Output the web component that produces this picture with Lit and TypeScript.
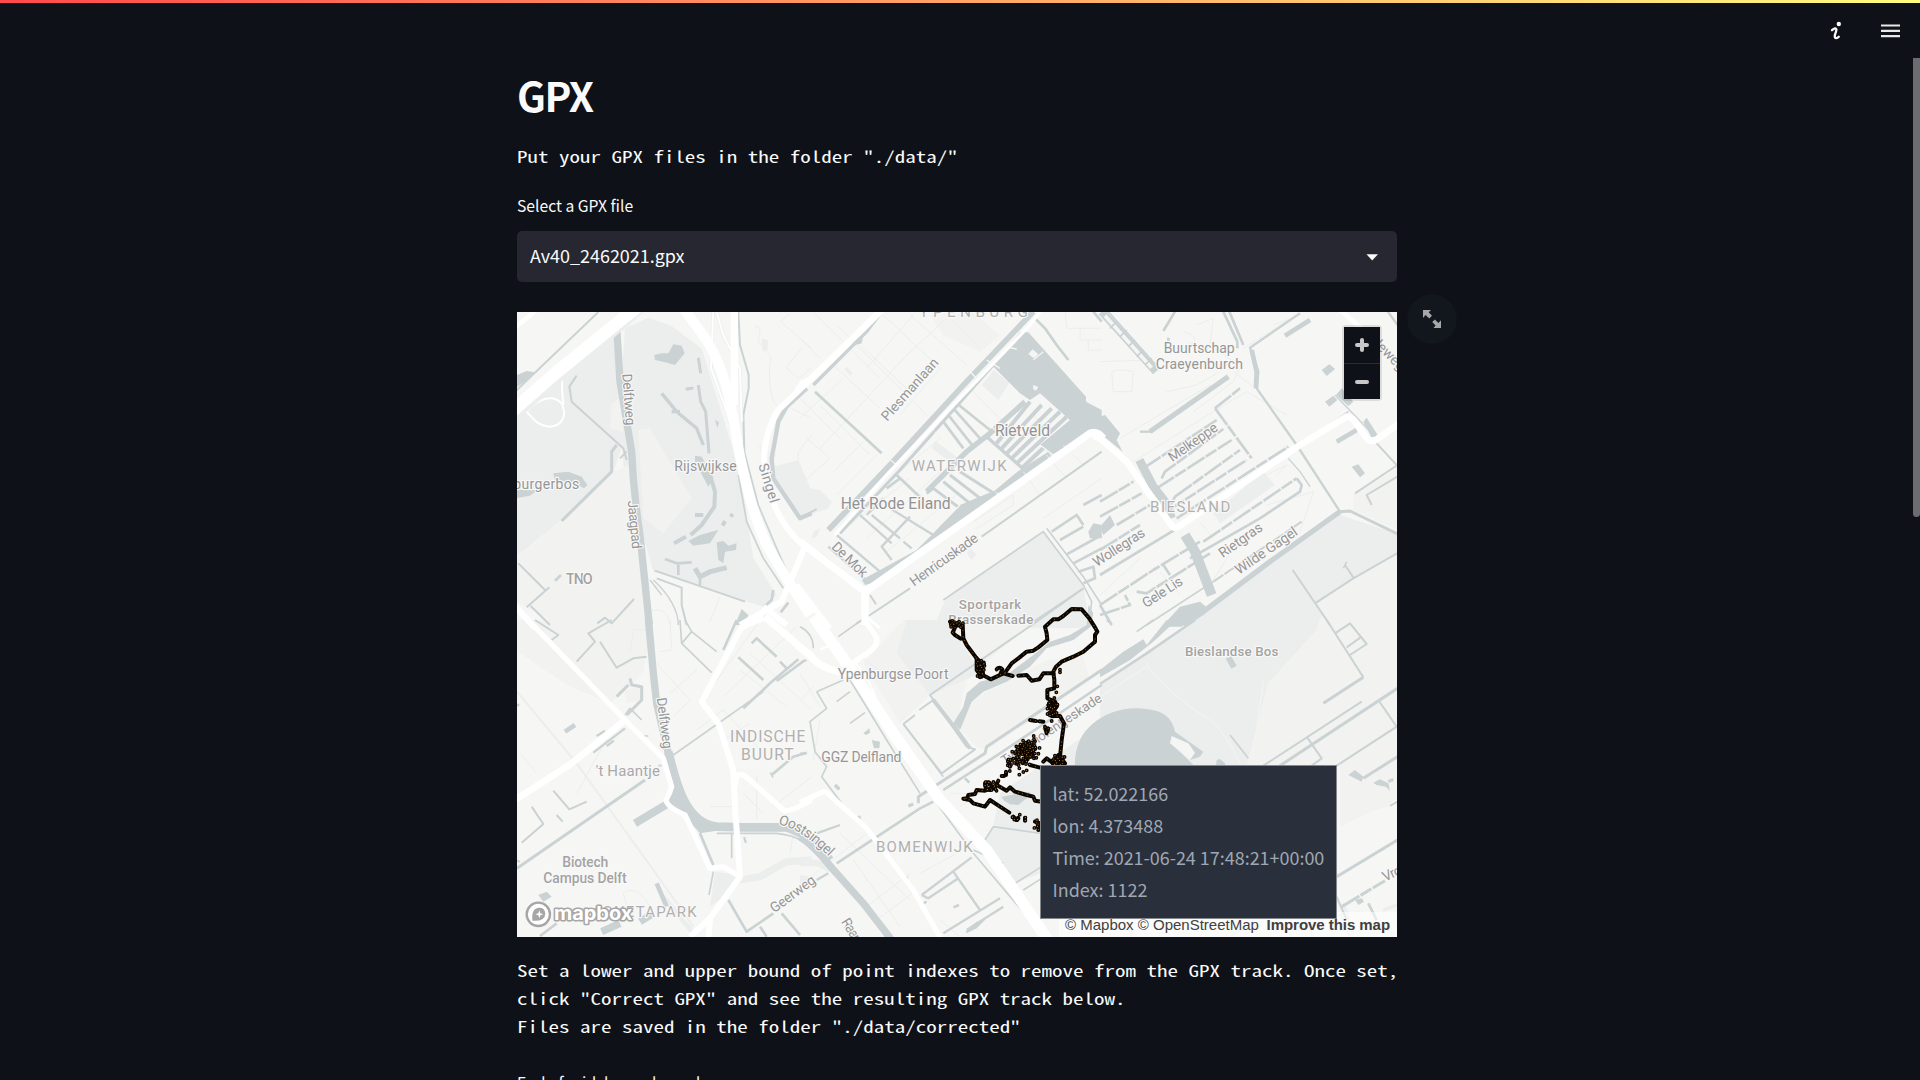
import { LitElement, html, svg, css } from "lit";
import { customElement } from "lit/decorators.js";

type Shape = [string, number, string];
type Label = [number, number, string, number, number, number, string?];

interface Tile {
  x: number;
  y: number;
  areas: [string, string][];
  lines: Shape[];
}

/* Each tile is drawn at three units per pixel, from its own origin. */
const TILES: Record<string, Tile> = {
  A: {
    x: 510, y: 305,
    areas: [
      ["park", "M345 70L415 38L480 60L575 130L690 500L730 760L800 870L760 905L430 800L340 480L330 300Z"],
      ["soft", "M385 375L420 370L545 580L460 685L400 640Z"],
      ["park", "M0 330L310 75L330 300L345 400L310 500L155 645L0 770Z"],
      ["soft", "M0 775L155 645L310 500L355 480L405 780L415 960L390 1000L150 960L0 880Z"],
      ["soft", "M305 295L330 280L340 380L300 370Z"],
      ["water", "M433 150L455 145L475 145L490 118L515 122L524 145L495 180L465 172L435 165Z"],
      ["water", "M535 708L570 690L625 675L600 715L550 722Z"],
      ["water", "M620 712L640 708L655 722L680 715L678 735L645 740L640 775L625 765Z"],
      ["water", "M21 210L50 198L75 202L60 220L15 250Z"],
      ["water", "M130 505L175 500L215 515L232 540L222 550L180 528L135 528Z"],
      ["water", "M15 555L80 555L110 520L90 550L60 572L15 580Z"],
      ["water", "M695 912L715 930L705 960L675 960Z"],
      ["water", "M555 452L575 455L610 520L595 545L555 470Z"],
      ["water", "M615 345L627 352L622 368Z"],
      ["park", "M755 100L775 105L772 135L758 140Z"],
      ["park", "M790 485L865 465L905 560L905 620L870 640L790 530Z"],
      ["soft", "M745 420L800 450L770 500Z"],
    ],
    lines: [
      ["faint", 3, "M735 65Q750 60 750 80L745 110L783 155Q770 220 790 290L800 300M840 25L812 50L905 130M905 190L865 220L828 188L875 130M905 390L865 440L865 465M905 340L845 310M600 950L630 875M420 920Q470 900 480 960"],
      ["water", 6, "M10 265L265 21"],
      ["water", 22, "M320 65L330 230L365 440Q370 560 390 690L418 960"],
      ["water", 6, "M200 212L178 245L185 290L340 430L350 465M350 440L330 460"],
      ["water", 9, "M320 420L305 440L305 500L155 648"],
      ["water", 9, "M565 158L572 205M527 253L550 249M565 240L572 290L587 320L597 445"],
      ["water", 10, "M455 265L500 320L560 370L580 420M485 320H510"],
      ["water", 12, "M600 510L615 560L613 605L575 660L542 690M555 630H580M492 715L528 695M668 627L662 635M645 648L638 662"],
      ["water", 8, "M465 762L500 775L545 772M505 780V810M570 815V840"],
      ["water", 15, "M555 790L570 815L600 800L650 788"],
      ["water", 6, "M435 797L705 890M440 820L515 848L515 900L530 960"],
      ["water", 4, "M420 825L455 870M430 825C480 870 505 920 505 960"],
      ["water", 8, "M790 855L785 885L762 905M835 893L812 922M800 930L820 955"],
      ["water", 6, "M25 775L105 855M50 907L118 847M62 903L120 960M262 955L285 938L305 955L372 882"],
      ["water", 8, "M135 827L153 810"],
      ["water", 6, "M685 20L690 120L716 210L716 250L700 330L703 440"],
      ["water", 5, "M685 510L710 650L760 760L820 850M703 440L745 600L800 730L840 820"],
      ["water", 13, "M890 250L830 305L805 350L785 460L790 520L870 640L905 625"],
      ["case", 10, "M610 10L603 190L640 290L675 400M617 10L640 90L690 190L695 350M50 320C90 275 130 270 155 295C175 340 150 365 115 365C80 360 70 340 45 315M160 300C150 200 155 200 200 165"],
      ["road", 6, "M610 10L603 190L640 290L675 400M617 10L640 90L690 190L695 350M50 320C90 275 130 270 155 295C175 340 150 365 115 365C80 360 70 340 45 315M160 300C150 200 155 200 200 165"],
      ["road", 14, "M0 80L85 10"],
      ["case", 46, "M0 335L130 220L345 40L390 0"],
      ["road", 38, "M0 325L130 210L345 35L390 0"],
      ["road", 30, "M520 10L590 105C640 190 660 270 680 400C700 520 725 620 770 720L830 820L900 930"],
      ["road", 22, "M673 10L673 300"],
      ["road", 18, "M910 215L800 320C760 400 755 460 770 540C800 630 830 680 885 725"],
      ["road", 18, "M885 725L815 890L690 960M760 905L830 960M0 885L75 970"],
    ],
  },
  B: {
    x: 800, y: 305,
    areas: [
      ["park", "M0 545L60 555L95 590L85 610L0 640Z"],
      ["soft", "M390 30L520 25L600 90L540 140L430 90Z"],
      ["park", "M440 875L730 675L850 840L870 970L400 970Z"],
      ["water", "M575 180L660 82L685 82L858 275L858 290L905 315L905 378L870 385L755 450L720 420L810 345L720 265L690 285L660 265L600 205Z"],
      ["land", "M698 133L715 148L702 160L685 147Z"],
      ["land", "M700 240L715 246L708 257L699 252Z"],
      ["park", "M582 195L628 235L595 285L545 240Z"],
      ["park", "M405 408L470 455L455 475L395 430Z"],
      ["park", "M140 185L158 205L150 212L133 193Z"],
      ["park", "M510 730L530 748L515 765L500 745Z"],
      ["park", "M40 680L62 670L50 695L35 700Z"],
      ["water", "M195 840L185 825L350 735L400 685L480 600L575 560L590 572L405 700L215 835Z"],
      ["water", "M655 498L745 440L755 455L600 565L580 560Z"],
      ["water", "M150 108L190 90L185 115L160 122Z"],
      ["water", "M865 680L880 655L905 660L905 700L870 700Z"],
    ],
    lines: [
      ["faint", 3, "M0 100L60 160M40 20L240 220M110 60L380 330M0 340L130 220M60 430L330 140M20 400L90 460L0 540M100 500L190 410M110 570L230 450M180 120L330 260M250 30L420 190L300 330M330 30L500 180M60 300L210 450M0 280L120 400M340 30L200 190M450 30L300 170M100 180L240 310M460 50L540 130M600 150L520 230M670 500L720 570M740 450L800 520M790 420L850 480M730 640L905 520M520 650L640 570L640 600L530 670"],
      ["faint", 3, "M795 20L800 70H905M840 70V105H905M865 105V135H905M150 660L330 520M200 700L420 500M260 740L480 560M700 330L760 390M500 240L640 380M300 500L420 400M60 740L120 790"],
      ["water", 10, "M40 240L200 80L245 20"],
      ["water", 8, "M45 260L110 320L245 445"],
      ["water", 6, "M0 268L22 252M0 640L50 612"],
      ["water", 17, "M85 675L270 480L500 230L700 20"],
      ["water", 9, "M120 685L300 495L500 270L580 180"],
      ["water", 8, "M290 510L385 600M470 295L570 375M460 310L540 400M445 330L520 425M430 350L490 430M300 520L260 550"],
      ["water", 16, "M675 290L570 385L500 440L380 560"],
      ["water", 10, "M560 395L670 492"],
      ["water", 12, "M590 415L690 290M605 430L725 300M620 445L755 310M635 460L780 320M650 475L800 335M665 490L820 345"],
      ["water", 9, "M480 500L590 570M450 510L560 595M430 530L530 612M400 550L500 625M380 565L400 550"],
      ["water", 7, "M180 630L275 715M215 630L300 700M270 610L400 690M330 635L245 725L275 765M110 690L240 800M85 725L205 832M310 710L335 730M200 630L250 580"],
      ["gap", 4, "M245 445L290 480M510 200L535 225M560 165L600 190M500 290L600 390M330 620L360 660M400 375L440 420M720 420L760 450M615 125L650 132M700 165L730 140M430 650L480 600M290 490L250 530M140 650L180 610"],
      ["water", 6, "M545 695L905 440M210 930L330 850M170 955L210 930M210 870L228 898"],
      ["water", 5, "M430 885L730 680L850 840L875 890L870 930M740 670L850 815L905 900M700 950L850 850"],
      ["water", 8, "M755 680L830 630L850 660M780 705L850 665M800 748L905 690M820 775L905 730M835 800L880 785L885 820L850 835M850 600L905 570"],
      ["water", 8, "M705 40L735 70L770 120L805 165M880 20L905 50"],
      ["road", 20, "M0 240L30 225L245 15M-10 260L10 235"],
      ["road", 10, "M105 690L260 510L690 60L720 20"],
      ["water", 6, "M120 685L300 495L500 270L580 180"],
      ["road", 22, "M0 710L195 860L870 385Q890 375 910 400M195 850V960"],
      ["road", 16, "M-10 840L90 970"],
      ["road", 8, "M200 935L240 970"],
    ],
  },
  C: {
    x: 1100, y: 305,
    areas: [
      ["park", "M720 630L905 690V960H250L310 920Z"],
      ["soft", "M905 740L760 820L645 895L690 970L905 970Z"],
      ["park", "M340 625L490 500L525 540L360 655Z"],
      ["soft", "M760 570L905 480V680L760 615Z"],
      ["water", "M0 335L15 330L60 385L50 405L68 440L0 385Z"],
      ["water", "M185 965L240 905L300 890L318 905L270 945L245 965Z"],
      ["water", "M790 350L800 338L833 390L815 398Z"],
      ["water", "M0 665L30 630L45 660L10 690Z"],
      ["water", "M665 195L688 178L705 192L680 213Z"],
      ["water", "M675 290L700 272L712 285L688 305Z"],
      ["water", "M708 270L725 250L760 290L745 303Z"],
      ["water", "M755 485L775 478L795 505L780 517Z"],
    ],
    lines: [
      ["faint", 3, "M35 200Q60 190 100 200L95 260H40ZM0 170L150 165M200 260L290 240L360 200M250 80Q290 90 285 110L240 130M290 60L340 40L330 120L400 170M100 470L340 320M60 400L330 240M400 200L480 260L560 380M340 320L440 260L560 330M500 600L640 560L600 680M330 840L420 700M0 870L120 760M180 800L240 870M20 580L130 510M400 560L560 480L530 510M420 190L400 230L280 320M590 30L430 130M300 650L340 700M520 60L600 30"],
      ["water", 24, "M5 20L168 200"],
      ["land", 11, "M15 32L155 188"],
      ["water", 5, "M30 70L50 50M60 95L80 75M85 125L105 105M110 155L130 135M135 180L155 160"],
      ["water", 5, "M25 20L172 185"],
      ["water", 8, "M225 20L190 78M205 98V115M370 20L412 110V130M388 20L430 120"],
      ["water", 7, "M600 25L450 128L475 200L470 250L590 420L720 620"],
      ["water", 14, "M455 135L470 200L468 250"],
      ["water", 14, "M555 92L630 45"],
      ["water", 15, "M150 380L385 215"],
      ["water", 7, "M120 380H155"],
      ["dash", 8, "M130 490L350 345M345 310L420 250M345 310L455 460M185 520L195 500L370 372M170 550L395 405M225 575L420 435M225 575L205 615M200 620L440 465M230 640L565 425"],
      ["water", 26, "M118 465L160 545L195 590L215 640"],
      ["dash", 8, "M0 590L100 530M0 635L125 565M50 660L150 600M0 735L120 660M0 900L160 795L300 710M310 710L590 520M110 860L140 865L330 745M0 930L90 900L75 870"],
      ["water", 8, "M0 810L240 665M270 760L480 640M480 640L600 560L605 540L590 520M0 900L35 960M190 780L210 810"],
      ["water", 30, "M255 690L285 740L335 870"],
      ["dash", 6, "M605 650L340 830"],
      ["water", 5, "M340 830L140 960"],
      ["water", 16, "M720 620L510 770L310 920L250 960"],
      ["water", 9, "M720 620L750 618L900 690"],
      ["water", 6, "M578 795L690 960M645 895L760 820L900 740M735 780L762 820M765 565L900 475M815 600L800 570L900 510M830 415L890 480L900 475"],
      ["water", 22, "M733 779L737 781"],
      ["water", 4, "M565 460L600 500L630 545M585 430L745 320M705 270L830 400"],
      ["water", 14, "M710 410L770 375"],
      ["water", 7, "M860 15L900 70"],
      ["road", 14, "M720 15L790 75"],
      ["road", 20, "M-20 392L0 400L80 470L215 662Q225 675 240 662L480 500L600 420L740 335Q755 335 765 350L800 400Q815 415 835 400L905 350"],
    ],
  },
  D: {
    x: 510, y: 620,
    areas: [
      ["soft", "M0 0H400L415 60L400 160L300 250L180 200L0 80Z"],
      ["park", "M615 755L690 765L690 790L600 860Z"],
      ["water", "M490 470L470 550L525 590L570 640L620 632L560 590L520 520L495 450Z"],
      ["water", "M85 825L110 815L125 830L100 845Z"],
      ["soft", "M345 210L395 200V240L350 250Z"],
    ],
    lines: [
      ["faint", 3, "M360 100L370 30H410M480 0L485 90L450 95M440 130L540 240L490 290M480 220L560 150M300 340L200 520M600 210L750 0M640 230L860 20M560 330L640 270L760 400M690 150L830 260M720 100L905 270M640 360L720 310M700 520L760 580M740 470V600M30 400L80 460M790 560L905 470M420 860Q380 790 340 820L360 900M850 640L840 700M600 560H680"],
      ["park", 6, "M21 215L200 430L430 750L550 920"],
      ["park", 22, "M690 780L750 770L830 725L905 720"],
      ["park", 14, "M460 830L550 940"],
      ["water", 6, "M75 0L145 45L125 60M200 125L255 65L235 40L305 0M270 65L320 143L370 115L410 110"],
      ["water", 22, "M415 -5L430 160L440 250L475 400"],
      ["water", 26, "M475 395C500 500 530 610 620 620L700 622H830C880 640 900 650 960 720"],
      ["water", 24, "M375 610L475 550"],
      ["water", 9, "M21 745L405 480"],
      ["water", 5, "M490 405L760 215"],
      ["water", 8, "M700 265L780 190L865 118M800 183L885 120M725 70L740 55L800 110M685 112L760 180M810 125L830 145"],
      ["water", 6, "M65 560L100 612L35 668M130 512L178 568L230 545M140 585L158 605"],
      ["water", 14, "M165 335L195 315M440 790L470 860"],
      ["water", 7, "M260 348L285 332M290 378L312 362M250 398L345 325"],
      ["water", 9, "M320 230L355 195M360 175L365 195L395 200V240L350 285"],
      ["water", 5, "M345 285L360 265L395 300M510 0L515 70L605 158M515 70L545 35L620 95M525 0L545 35M0 715L30 725"],
      ["water", 8, "M640 90L680 0M785 465L850 410L890 398M570 640L610 735M655 840L710 935L790 880M750 920L770 950M815 880L870 945"],
      ["water", 18, "M783 466L787 464M702 661L708 659"],
      ["water", 5, "M665 640V715M620 640H800Q850 645 880 665M610 755L597 825M400 348H415M445 437H455"],
      ["water", 22, "M275 935L330 910M390 905L430 880"],
      ["water", 8, "M90 948L140 910M0 255H28"],
      ["road", 16, "M50 -5L345 300L460 415L485 500Q480 520 468 540Q470 560 525 585L600 745L640 740L690 770"],
      ["road", 20, "M345 300L185 430L0 550"],
      ["road", 16, "M675 500L680 470Q690 455 710 472L820 570Q835 580 905 540"],
      ["road", 18, "M760 -5L720 10Q690 20 680 50L575 245L625 310L670 450L675 560L690 770L600 895L595 960M600 895L540 950"],
      ["road", 22, "M765 -10L910 115"],
    ],
  },
  E: {
    x: 800, y: 620,
    areas: [
      ["soft", "M310 0L700 0L500 180L470 310L390 225L300 310L190 130Z"],
      ["park", "M290 100L320 0H440L480 60L540 160L390 225Z"],
      ["soft", "M395 235L480 320L500 250L740 120L850 110L870 180L560 390L530 380Z"],
      ["park", "M600 520L850 350L905 380V640L720 640L580 615Z"],
      ["park", "M550 660L580 620L720 645V760L645 790L560 700Z"],
      ["water", "M905 300C850 320 825 370 828 440H905Z"],
      ["water", "M460 310L490 260L500 220L540 185L620 165L700 105L750 65L810 45L860 15L865 -45L880 -20L872 20L820 60L740 85L690 140L620 185L550 215L515 245L480 330Z"],
      ["water", "M605 530L690 515L680 535L655 555L630 553L610 540Z"],
      ["water", "M215 360L240 365L238 385L222 385Z"],
      ["water", "M190 340L208 325L210 338L198 345Z"],
      ["water", "M497 935L530 905L555 900L530 925L500 940Z"],
      ["park", "M0 765L30 770L20 800L0 810Z"],
    ],
    lines: [
      ["faint", 3, "M0 240L40 200M60 300L40 420M120 640L330 840M160 720L300 920M20 780L200 640M200 860L330 760M230 900L350 810M250 160L180 110M350 180L420 130M450 520H540M480 560L600 480M420 900L480 950M360 760L470 700M0 160L60 260M200 180L240 280"],
      ["park", 20, "M0 730Q60 720 90 750"],
      ["water", 5, "M185 0L115 50M0 130L20 120M0 20Q40 40 40 85"],
      ["water", 5, "M150 180L260 360L360 520M165 175L280 350M50 215L130 180M50 215L80 265L30 305L45 395L80 440L65 470L125 550M110 245L150 215M150 310L195 278M0 400H20"],
      ["water", 10, "M165 597L182 590M325 558L340 552M105 495L118 508"],
      ["water", 6, "M310 312L425 460L525 388L500 380L390 225L700 12L850 -95M310 312L345 285M358 270L400 240"],
      ["water", 12, "M400 240L470 330L510 385"],
      ["water", 9, "M355 550L355 530L555 400L560 380L905 150"],
      ["water", 8, "M110 730L360 565L400 545"],
      ["water", 8, "M430 510L600 400L905 195M495 475L508 488"],
      ["water", 5, "M555 660L580 620L720 640M410 550L520 700L690 900M520 690L610 730M645 790L725 740M670 810L725 775M430 470L310 312"],
      ["water", 7, "M365 825L515 712M365 825L385 835L475 775M460 755L540 870M430 940L600 835M500 930L610 860M370 850L380 845M50 640L120 615M50 780L85 760M320 770L325 800"],
      ["water", 18, "M467 855L470 862"],
      ["water", 22, "M0 650C60 690 80 730 110 760L190 850L275 960"],
      ["road", 16, "M0 548L65 517Q75 512 85 522L200 625L340 810L430 970"],
      ["road", 16, "M190 -5L225 45Q240 65 215 90L150 135"],
      ["road", 6, "M140 110Q100 60 60 90M160 120Q210 180 230 240"],
      ["road", 34, "M40 -10L140 130L280 340L420 540L560 690L750 970"],
      ["road", 22, "M-10 75L30 105Q60 150 150 160"],
    ],
  },
  F: {
    x: 1100, y: 620,
    areas: [
      ["park", "M0 195L290 0H660L650 30L505 190L440 440H0Z"],
      ["soft", "M660 -10H905V530L720 620V437H440L505 190L650 30Z"],
      ["soft", "M560 437L720 437L720 600L860 560L905 520V440Z"],
      ["water", "M0 150L70 95L130 58L140 75L200 0H230L160 65L90 120L0 172Z"],
      ["water", "M-75 440C-80 340 0 265 110 265C190 268 215 290 225 335L310 395L300 410L270 420L210 365L285 440Z"],
      ["land", "M215 348L265 370L285 398L270 420L210 370Z"],
      ["water", "M348 440L350 420L360 417L375 430V440Z"],
      ["water", "M745 465L765 450L790 470L785 485Z"],
      ["water", "M820 488L840 478L865 490L870 512L858 500L830 495Z"],
      ["water", "M765 840L785 835L792 845L775 855Z"],
    ],
    lines: [
      ["gapl", 3, "M0 230L140 140Q230 240 330 300Q380 340 420 430M490 185L455 430M140 130L150 145"],
      ["park", 10, "M730 850L760 940M850 870L905 850"],
      ["water", 8, "M0 192L140 100L285 0"],
      ["water", 5, "M110 35L160 0M20 0L35 12M390 345L445 415"],
      ["water", 18, "M385 112L402 142"],
      ["water", 6, "M680 0L790 172M705 40L750 10L800 72L750 105M740 82L785 50"],
      ["water", 9, "M790 172L670 250"],
      ["water", 6, "M785 245L490 437M620 350L665 415L635 437M835 240L890 320L710 437"],
      ["water", 9, "M900 200L540 437M790 475L900 405M865 485L880 478M710 770L900 655"],
      ["water", 6, "M870 558L900 540M710 830L740 900"],
      ["dash", 9, "M725 860L855 782"],
      ["water", 8, "M805 850L830 900"],
      ["park", 7, "M600 870L640 950M70 900L100 950M390 950L460 900M850 910L880 950M720 880L750 950"],
    ],
  },
};

const LABELS: Record<string, Label[]> = {
  A: [
    [337, 207, "Delftweg", 41, 155, 86],
    [353, 588, "Jaagpad", 41, 145, 84.5],
    [493, 498, "Rijswijkse", 42, 187, 0],
    [10, 552, "burgerbos", 42, 198, 0],
    [168, 836, "TNO", 43, 80, 0, "poi"],
    [745, 480, "Singel", 42, 122, 73],
  ],
  B: [
    [358, 37, "YPENBURG", 46, 326, 0, "district"],
    [262, 350, "Plesmanlaan", 41, 235, -48.5],
    [585, 392, "Rietveld", 47, 165, 0, "town"],
    [335, 498, "WATERWIJK", 45, 285, 0, "district"],
    [122, 611, "Het Rode Eiland", 47, 330, 0, "town"],
    [92, 728, "De Mok", 42, 132, 44],
    [342, 845, "Henricuskade", 42, 240, -35.5],
    [476, 912, "Sportpark", 40, 188, 0, "poi"],
    [445, 958, "Brasserskade", 40, 255, 0, "poi"],
  ],
  C: [
    [191, 144, "Buurtschap", 42, 213, 0],
    [167, 192, "Craeyenburch", 42, 262, 0],
    [217, 472, "Melkeppe", 42, 170, -35],
    [150, 620, "BIESLAND", 45, 241, 0, "district"],
    [-10, 787, "Wollegras", 42, 177, -33],
    [368, 760, "Rietgras", 42, 150, -35],
    [417, 810, "Wilde Gagel", 42, 217, -34.5],
    [138, 910, "Gele Lis", 42, 135, -33],
    [822, 122, "leweg", 42, 0, 45],
  ],
  D: [
    [440, 235, "Delftweg", 41, 154, 82.5],
    [257, 467, "'t Haantje", 45, 193, 0, "light"],
    [660, 366, "INDISCHE", 47, 226, 0, "district"],
    [693, 421, "BUURT", 47, 158, 0, "district"],
    [157, 741, "Biotech", 42, 138, 0, "poi"],
    [100, 789, "Campus Delft", 42, 250, 0, "poi"],
    [793, 880, "Geerweg", 42, 158, -36.5],
    [245, 890, "AGNETAPARK", 45, 315, 0, "district"],
  ],
  E: [
    [113, 177, "Ypenburgse Poort", 42, 333, 0],
    [64, 425, "GGZ Delfland", 42, 240, 0],
    [228, 696, "BOMENWIJK", 45, 290, 0, "district"],
    [122, 905, "Raam", 42, 95, 58],
    [615, 436, "Tweemolentjeskade", 40, 352, -33.5],
  ],
  F: [
    [255, 107, "Bieslandse Bos", 40, 280, 0, "poi"],
    [855, 785, "Vrouw", 42, 110, -25],
  ],
};

const TRACK = [
  "M60 95L70 108L98 105L100 145L110 165L140 205L158 235L158 255L182 268L220 250L248 258",
  "M68 128L75 135L92 146M68 128L75 112M140 205L140 240L155 260M145 210L155 235M150 225L150 262",
  "M200 238Q208 228 217 238L212 250",
  "M225 248L245 220L265 205L290 185L310 182L325 172L352 150L350 130L345 110L370 88L385 88L400 78L425 57L455 58L478 85L495 112L502 125L495 135L495 155L460 185L430 200L395 215L378 230L370 245L373 270L373 295L352 300L352 325L375 335L380 350L358 370L365 378L390 378L402 400L395 450L390 500L385 520",
  "M265 257L290 255L305 272L328 268L340 250L370 250",
  "M300 390L318 393M328 394L340 395",
  "M345 410L350 430M355 415L352 425",
  "M355 345L378 348L372 365L360 355Z M362 340L382 345",
  "M238 515L240 530M228 545L228 555M215 558H222",
  "M205 572L195 590L165 602L140 600L135 612L115 615L112 625L100 626L120 630L130 640L165 650L180 630L210 650L238 668",
  "M165 580Q180 570 185 590L180 600L168 598Z",
  "M200 585L230 602L240 592L255 605L290 615L310 620L315 632L335 635",
  "M250 680L260 690M285 683V692M315 695L330 700L325 720",
  "M300 525L330 533M340 515L350 505L370 520L385 495L405 520",
];

const DOTS = (() => {
  let seed = 17;
  const rnd = () => {
    seed = (seed * 16807) % 2147483647;
    return seed / 2147483647;
  };
  const dots: [number, number][] = [];
  for (let i = 0; i < 135; i++) {
    const t = rnd() * Math.PI * 2;
    const r = (rnd() + rnd()) / 2;
    dots.push([283 + Math.cos(t) * r * 48 + Math.sin(t) * 5, 490 - Math.cos(t) * r * 16 + Math.sin(t) * r * 44]);
  }
  for (let i = 0; i < 26; i++) dots.push([366 + rnd() * 40, 495 + rnd() * 30]);
  for (let i = 0; i < 18; i++) dots.push([350 + rnd() * 32, 335 + rnd() * 42]);
  for (let i = 0; i < 8; i++) dots.push([245 + rnd() * 25, 672 + rnd() * 20]);
  for (let i = 0; i < 10; i++) dots.push([232 + rnd() * 12, 505 + rnd() * 40]);
  for (let i = 0; i < 16; i++) dots.push([140 + rnd() * 24, 205 + rnd() * 56]);
  for (let i = 0; i < 14; i++) dots.push([60 + rnd() * 40, 92 + rnd() * 20]);
  for (let i = 0; i < 12; i++) dots.push([165 + rnd() * 38, 575 + rnd() * 28]);
  for (let i = 0; i < 8; i++) dots.push([312 + rnd() * 20, 688 + rnd() * 26]);
  dots.push(
    [268, 554], [280, 546], [290, 541], [390, 239], [390, 247], [382, 289], [379, 307], [373, 324],
    [365, 393], [311, 438], [312, 448], [305, 458], [268, 535], [286, 683], [286, 691],
  );
  return dots;
})();

@customElement("gpx-map")
class GpxMap extends LitElement {
  static styles = css`
    :host { display: block; width: 880px; height: 625px; position: relative; overflow: hidden; background: #f6f6f4; }
    svg { display: block; }
    .canvas { width: 880px; height: 625px; }
    .a-park { fill: #eceeed; }
    .a-soft { fill: #f2f2f0; }
    .a-land { fill: #f5f5f3; }
    .a-water { fill: #cad2d3; }
    .l { fill: none; stroke-linejoin: round; }
    .l-road { stroke: #ffffff; }
    .l-case { stroke: #ebeeed; }
    .l-water { stroke: #cad2d3; }
    .l-dash { stroke: #cad2d3; stroke-dasharray: 62 4 38 5; }
    .l-park { stroke: #eceeed; }
    .l-land, .l-gap { stroke: #f5f5f3; }
    .l-gapl { stroke: #f3f5f4; }
    .l-faint { stroke: #ebeeed; }
    .label { font-family: "Roboto", "Liberation Sans", sans-serif; fill: #969696; stroke: #f8f8f7; stroke-width: 7px; stroke-linejoin: round; paint-order: stroke; }
    .poi { fill: #a3a3a3; font-weight: 500; }
    .town { fill: #929292; }
    .light { fill: #a9a9a9; }
    .district { fill: #b0b0b0; }
    .track { fill: none; stroke: #0a0602; stroke-width: 12px; stroke-linecap: round; stroke-linejoin: round; }
    .spark { fill: none; stroke: #a8691f; stroke-width: 3px; stroke-dasharray: 3 12 3 16 3 8; }
    .dot { fill: #cf852e; stroke: #0a0602; stroke-width: 4px; }
    .zoom { position: absolute; right: 17px; top: 15px; width: 36px; height: 72px; display: grid; grid-template-rows: 36px 35px; gap: 1px; background: #292c33; box-shadow: 0 0 0 2px rgba(0, 0, 0, 0.1); border-radius: 2px; }
    .zoom span { background: #0e1117; display: grid; place-items: center; }
    .zoom path { stroke: #c8c8c8; stroke-width: 4; stroke-linecap: round; fill: none; }
    .credit { position: absolute; right: 0; bottom: 0; height: 25px; width: 338px; box-sizing: border-box; padding: 0 7px 0 6px; display: flex; align-items: center; justify-content: space-between; background: rgba(255, 255, 255, 0.5); font: 15px/25px "Liberation Sans", Arial, sans-serif; color: #404040; white-space: pre; }
    .credit b { letter-spacing: -0.05px; }
    .tip { position: absolute; left: 523px; top: 453px; width: 297px; height: 154px; box-sizing: border-box; border: 1px solid #86898c; background: #29303b; padding: 11px 0 0 11.5px; font-family: "Noto Sans CJK SC", "Noto Sans", sans-serif; font-size: 17.95px; line-height: 32px; color: #a0a7b4; white-space: pre; }
    .tip div { height: 32px; }
    .brand { font-family: "Inter", sans-serif; font-weight: 700; fill: #fff; stroke: #a6a6a6; stroke-width: 9px; paint-order: stroke; stroke-linejoin: round; }
  `;

  private group(key: string, body: unknown) {
    const t = TILES[key];
    return svg`<g transform="translate(${t.x} ${t.y}) scale(0.333333)">${body}</g>`;
  }

  private lines(key: string, roads: boolean) {
    return TILES[key].lines
      .filter(([k]) => (k === "road" || k === "case") === roads)
      .map(([k, w, d]) => svg`<path class="l l-${k}" stroke-width=${w} d=${d}></path>`);
  }

  private label([x, y, text, size, len, rot, kind]: Label) {
    const turn = `translate(${x} ${y}) rotate(${rot})`;
    return len
      ? svg`<text class="label ${kind ?? ""}" transform=${turn} font-size=${size} textLength=${len}>${text}</text>`
      : svg`<text class="label" transform=${turn} font-size=${size}>${text}</text>`;
  }

  render() {
    const keys = Object.keys(TILES);
    return html`
      <svg class="canvas" viewBox="517 312 880 625">
        ${keys.map((k) => this.group(k, TILES[k].areas.map(([c, d]) => svg`<path class="a-${c}" d=${d}></path>`)))}
        ${keys.map((k) => this.group(k, this.lines(k, false)))}
        ${keys.map((k) => this.group(k, this.lines(k, true)))}
        ${keys.map((k) => this.group(k, LABELS[k].map((l) => this.label(l))))}
        ${this.group("D", svg`
          <path id="oost" fill="none" d="M804 612C850 625 885 640 962 715"></path>
          <text class="label" font-size="42"><textPath href="#oost" textLength="184">Oostsingel</textPath></text>
          <circle cx="85" cy="883" r="35" fill="#fff" stroke="#a6a6a6" stroke-width="7"></circle>
          <path d="M67 902Q64 868 82 864Q104 860 106 881Q105 905 67 902Z" fill="#a6a6a6"></path>
          <path d="M88 871L91 880L100 883L91 886L88 895L85 886L76 883L85 880Z" fill="#fff"></path>
          <text class="brand" x="132" y="900" font-size="56" textLength="235" lengthAdjust="spacingAndGlyphs">mapbox</text>
        `)}
        <g transform="translate(930 590) scale(0.333333)">
          ${TRACK.map((d) => svg`<path class="track" d=${d}></path>`)}
          ${TRACK.map((d) => svg`<path class="spark" d=${d}></path>`)}
          ${DOTS.map(([x, y]) => svg`<circle class="dot" cx=${x} cy=${y} r="3.8"></circle>`)}
        </g>
      </svg>
      <div class="zoom">
        <span><svg width="18" height="18"><path d="M4 9H14M9 4V14"></path></svg></span>
        <span><svg width="18" height="18"><path d="M4 9H14"></path></svg></span>
      </div>
      <div class="credit"><span>© Mapbox © OpenStreetMap</span><b>Improve this map</b></div>
      <div class="tip"><div>lat: 52.022166</div><div>lon: 4.373488</div><div>Time: 2021-06-24 17:48:21+00:00</div><div>Index: 1122</div></div>
    `;
  }
}

@customElement("app-root")
class AppRoot extends LitElement {
  static styles = css`
    :host { display: block; width: 1920px; height: 1080px; overflow: hidden; background: #0e1117; color: #fafafa; position: relative; font-family: "Noto Sans CJK SC", "Noto Sans", sans-serif; }
    svg { display: block; }
    .stripe { height: 3px; background: linear-gradient(90deg, #ff4b4b, #fffd80); }
    .toolbar { height: 55px; display: flex; justify-content: flex-end; align-items: center; gap: 38px; padding: 1px 20px 0 0; box-sizing: border-box; }
    .column { width: 880px; margin-left: 517px; display: flex; flex-direction: column; }
    h1 { margin: 0; height: 77px; line-height: 73px; font-size: 40.4px; font-weight: 700; letter-spacing: -1.4px; }
    .mono { font-family: "Noto Sans Mono CJK SC", "DejaVu Sans Mono", monospace; font-size: 16px; font-weight: 300; line-height: 28px; white-space: pre; height: 28px; width: 671px; transform: scaleX(1.3115); transform-origin: left top; }
    .lead { margin-top: 7px; }
    .label { margin-top: 22px; height: 28px; line-height: 28px; font-size: 15.7px; }
    .select { margin-top: 11px; height: 51px; border-radius: 5px; background: #262730; display: flex; align-items: center; justify-content: space-between; padding: 0 13px 0 13px; font-size: 17.95px; }
    .select span { line-height: 28px; margin-top: -3px; }
    .frame { position: relative; margin-top: 30px; height: 625px; }
    .expand { position: absolute; left: 890px; top: -18px; width: 50px; height: 50px; border-radius: 50%; background: #12161d; display: grid; place-items: center; }
    .notes { margin-top: 19px; }
    .next { height: 28px; line-height: 28px; font-size: 15.7px; padding-top: 1px; }
    .thumb { position: absolute; right: 0; top: 58px; width: 7px; height: 459px; background: #6b6c70; border-radius: 0 0 4px 4px; }
  `;

  render() {
    return html`
      <div class="stripe"></div>
      <div class="toolbar">
        <svg width="12" height="20" viewBox="0 0 12 20"><circle cx="8.8" cy="3" r="2.2" fill="#fafafa"></circle><path d="M2 9.2Q5.6 6 6.4 8.4Q6.6 9.2 5 13.6Q4.2 16.8 6 17.2Q7.4 17.4 8.8 15.8" fill="none" stroke="#fafafa" stroke-width="2.3" stroke-linecap="round"></path></svg>
        <svg width="20" height="16" viewBox="0 0 20 16"><path d="M1 2.5H20M1 7.8H20M1 13.1H20" stroke="#e8e8e8" stroke-width="2.2"></path></svg>
      </div>
      <main class="column">
        <h1>GPX</h1>
        <div class="mono lead">Put your GPX files in the folder "./data/"</div>
        <div class="label">Select a GPX file</div>
        <div class="select"><span>Av40_2462021.gpx</span><svg width="24" height="24"><path d="M6.5 9.2H18L12.2 15.6Z" fill="#fafafa"></path></svg></div>
        <div class="frame">
          <gpx-map></gpx-map>
          <div class="expand"><svg width="20" height="20" viewBox="0 0 20 20"><path d="M1 1H9L6.7 3.3L10 6.8L7.2 9.6L3.6 6.1L1 9Z M19 19H11.5L13.6 16.6L10.2 13.1L12.9 10.4L16.4 13.9L19 11.2Z" fill="#a6a7a9"></path></svg></div>
        </div>
        <div class="notes">
          <div class="mono">Set a lower and upper bound of point indexes to remove from the GPX track. Once set,</div>
          <div class="mono">click "Correct GPX" and see the resulting GPX track below.</div>
          <div class="mono">Files are saved in the folder "./data/corrected"</div>
          <div class="mono"> </div>
          <div class="next">End of grid, house bound</div>
        </div>
      </main>
      <div class="thumb"></div>
    `;
  }
}
